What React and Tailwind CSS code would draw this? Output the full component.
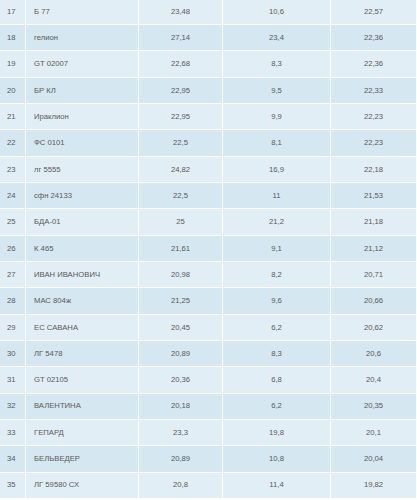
import React from "react";

const rows = [
  [17, "Б 77", "23,48", "10,6", "22,57"],
  [18, "гелион", "27,14", "23,4", "22,36"],
  [19, "GT 02007", "22,68", "8,3", "22,36"],
  [20, "БР КЛ", "22,95", "9,5", "22,33"],
  [21, "Ираклион", "22,95", "9,9", "22,23"],
  [22, "ФС 0101", "22,5", "8,1", "22,23"],
  [23, "лг 5555", "24,82", "16,9", "22,18"],
  [24, "сфн 24133", "22,5", "11", "21,53"],
  [25, "БДА-01", "25", "21,2", "21,18"],
  [26, "К 465", "21,61", "9,1", "21,12"],
  [27, "ИВАН ИВАНОВИЧ", "20,98", "8,2", "20,71"],
  [28, "МАС 804ж", "21,25", "9,6", "20,66"],
  [29, "ЕС САВАНА", "20,45", "6,2", "20,62"],
  [30, "ЛГ 5478", "20,89", "8,3", "20,6"],
  [31, "GT 02105", "20,36", "6,8", "20,4"],
  [32, "ВАЛЕНТИНА", "20,18", "6,2", "20,35"],
  [33, "ГЕПАРД", "23,3", "19,8", "20,1"],
  [34, "БЕЛЬВЕДЕР", "20,89", "10,8", "20,04"],
  [35, "ЛГ 59580 СХ", "20,8", "11,4", "19,82"],
];

export default function App() {
  return (
    <div className="w-[417px] h-[500px] overflow-hidden bg-white">
      <div className="-mt-[1.33px] w-[416px] font-['Liberation_Sans',Arial,sans-serif] text-[7.7px] text-[#5a5a5a]">
        {rows.map((r, i) => (
          <div
            key={r[0]}
            className={`grid grid-cols-[26px_113px_84px_108px_85px] h-[26.33px] border-b border-white ${
              i % 2 === 0 ? "bg-[#e2eef5]" : "bg-[#d5e7f1]"
            }`}
          >
            <div className="flex items-center pl-[7px] border-r border-white">{r[0]}</div>
            <div className="flex items-center pl-[8px] border-r border-white">{r[1]}</div>
            <div className="flex items-center justify-center border-r border-white">{r[2]}</div>
            <div className="flex items-center justify-center border-r border-white">{r[3]}</div>
            <div className="flex items-center justify-center">{r[4]}</div>
          </div>
        ))}
      </div>
    </div>
  );
}
